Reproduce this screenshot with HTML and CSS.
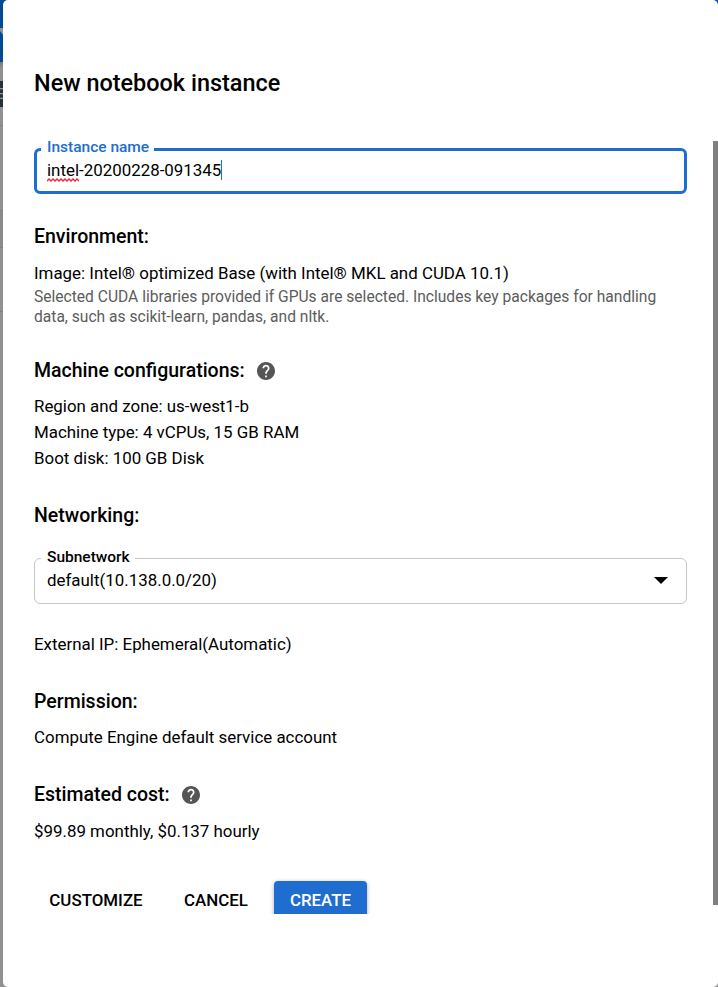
FILE: index.html
```html
<!DOCTYPE html>
<html lang="en">
<head>
<meta charset="utf-8">
<title>New notebook instance</title>
<link rel="stylesheet" href="styles.css">
</head>
<body>
<div class="backdrop"><div class="bar-top"><svg class="edge-mark" viewBox="0 0 3 8"><path d="M0 0H3V7L0 3Z"/></svg></div><div class="bar-shade"></div><div class="bar-dark">E</div><div class="table-edge"></div></div>
<main class="dialog">
  <h1>New notebook instance</h1>
  <div class="field focused">
    <label>Instance name</label>
    <div class="value"><span><span class="misspelled">intel<svg class="squiggle" viewBox="0 0 32 4"><path d="M0 3L2 1L4 3L6 1L8 3L10 1L12 3L14 1L16 3L18 1L20 3L22 1L24 3L26 1L28 3L30 1L32 3"/></svg></span>-20200228-091345</span><i class="caret"></i></div>
  </div>
  <section class="environment">
    <h2>Environment:</h2>
    <p>Image: Intel® optimized Base (with Intel® MKL and CUDA 10.1)</p>
    <p class="hint">Selected CUDA libraries provided if GPUs are selected. Includes key packages for handling<br>data, such as scikit-learn, pandas, and nltk.</p>
  </section>
  <section class="machine">
    <h2>Machine configurations:<svg class="help" viewBox="2 2 20 20"><path d="M12 2C6.48 2 2 6.48 2 12s4.48 10 10 10 10-4.480 10-10S17.520 2 12 2zm1 17h-2v-2h2v2zm2.070-7.750l-.9.920C13.450 12.900 13 13.500 13 15h-2v-.5c0-1.100.45-2.100 1.170-2.830l1.240-1.260c.370-.360.590-.860.590-1.410 0-1.100-.9-2-2-2s-2 .9-2 2H8c0-2.210 1.790-4 4-4s4 1.790 4 4c0 .88-.360 1.680-.930 2.250z"/></svg></h2>
    <p>Region and zone: us-west1-b</p>
    <p>Machine type: 4 vCPUs, 15 GB RAM</p>
    <p>Boot disk: 100 GB Disk</p>
  </section>
  <section class="network">
    <h2>Networking:</h2>
    <div class="field select">
      <label>Subnetwork</label>
      <div class="value"><span>default(10.138.0.0/20)</span></div>
      <svg class="arrow" viewBox="0 0 14 7"><path d="M0 0H14L7 7Z"/></svg>
    </div>
    <p>External IP: Ephemeral(Automatic)</p>
  </section>
  <section class="permission">
    <h2>Permission:</h2>
    <p>Compute Engine default service account</p>
  </section>
  <section class="cost">
    <h2>Estimated cost:<svg class="help" viewBox="2 2 20 20"><path d="M12 2C6.48 2 2 6.48 2 12s4.48 10 10 10 10-4.480 10-10S17.520 2 12 2zm1 17h-2v-2h2v2zm2.070-7.750l-.9.920C13.450 12.900 13 13.500 13 15h-2v-.5c0-1.100.45-2.100 1.170-2.830l1.240-1.260c.370-.360.590-.860.590-1.410 0-1.100-.9-2-2-2s-2 .9-2 2H8c0-2.210 1.790-4 4-4s4 1.790 4 4c0 .88-.360 1.680-.930 2.250z"/></svg></h2>
    <p>$99.89 monthly, $0.137 hourly</p>
  </section>
  <div class="actions">
    <button class="customize">CUSTOMIZE</button>
    <button class="cancel">CANCEL</button>
    <button class="create">CREATE</button>
  </div>
  <div class="scrollbar"></div>
</main>
</body>
</html>
```
FILE: styles.css
```css
* { box-sizing: border-box; }
body {
  margin: 0;
  height: 987px;
  overflow: hidden;
  background: #919191;
  color: #000;
  font: 16.9px/26px Roboto, sans-serif;
}
h1, h2, p { margin: 0; font-weight: 400; }
.backdrop { position: absolute; inset: 0; }
.bar-top { height: 62px; padding-top: 28px; background: #004a96; }
.edge-mark { display: block; width: 3px; height: 8px; fill: #8b9298; }
.bar-shade { height: 19px; background: linear-gradient(#777, #919191 6px); }
.bar-dark { height: 26px; background: #263238; color: #89979d; font-size: 14px; text-indent: -3px; }
.table-edge { height: 205px; background: linear-gradient(#919191 18px, #808080 18px, #808080 19px, #919191 19px, #919191 103px, #808080 103px, #808080 104px, #8b8b8b 104px, #8b8b8b 140px, #808080 140px, #808080 141px, #919191 141px, #919191 204px, #808080 204px); }
.dialog {
  position: relative;
  width: 715px;
  height: 987px;
  margin-left: 3px;
  padding: 69px 31px 0;
  background: #fff;
  border-radius: 5px;
}
h1 { height: 28px; font-size: 23.45px; line-height: 28px; font-weight: 500; white-space: nowrap; }
h2 {
  display: flex;
  align-items: center;
  height: 24px;
  font-size: 19.5px;
  line-height: 23px;
  font-weight: 500;
}
.field {
  position: relative;
  width: 653px;
  height: 46px;
  border: 1px solid #c6c6c6;
  border-radius: 6px;
  padding: 9px 12px;
}
.field label {
  position: absolute;
  top: -12px;
  left: 6px;
  padding: 0 5px 0 6px;
  background: #fff;
  font-size: 15.5px;
  line-height: 20px;
  font-weight: 500;
  white-space: nowrap;
}
.focused { margin-top: 51px; border: 3px solid #206dd2; padding: 7px 10px; }
.focused label { top: -14px; left: 4px; color: #206dd2; }
.value { display: flex; align-items: center; height: 24px; line-height: 24px; }
.caret { width: 1px; height: 20px; background: #206dd2; }
.misspelled { position: relative; }
.squiggle { position: absolute; left: 0; bottom: -2px; width: 32px; height: 4px; fill: none; stroke: #f02030; stroke-width: 1.3; }
.environment { margin-top: 30px; }
.environment h2 { margin-bottom: 12px; }
.hint { padding-top: 1px; color: #5c5c5c; font-size: 15.6px; line-height: 20px; white-space: nowrap; }
.machine { margin-top: 31px; }
.machine h2, .permission h2 { margin-bottom: 11px; }
.help { width: 18px; height: 18px; margin: 2px 0 0 12px; fill: #555; }
.network { margin-top: 32px; }
.network p { margin-top: 27px; }
.select { margin-top: 31px; }
.arrow { position: absolute; right: 18px; top: 18px; width: 14px; height: 7px; }
.permission { margin-top: 32px; }
.cost { margin-top: 32px; }
.cost h2 { margin-bottom: 12px; }
.actions { display: flex; height: 37px; margin: 33px 0 0 -4px; padding: 4px 4px 0; overflow: hidden; }
button {
  flex: none;
  height: 39px;
  padding: 0;
  border: 0;
  border-radius: 4px;
  background: none;
  color: #000;
  font: 500 16.9px/39px Roboto, sans-serif;
}
.customize { width: 124px; }
.cancel { width: 94px; margin-left: 11px; }
.create { width: 93px; margin-left: 11px; background: #206dd2; color: #fff; box-shadow: 0 1px 4px #0005; }
.scrollbar { position: absolute; right: 0; top: 141px; width: 5px; height: 764px; background: #808080; }
```
